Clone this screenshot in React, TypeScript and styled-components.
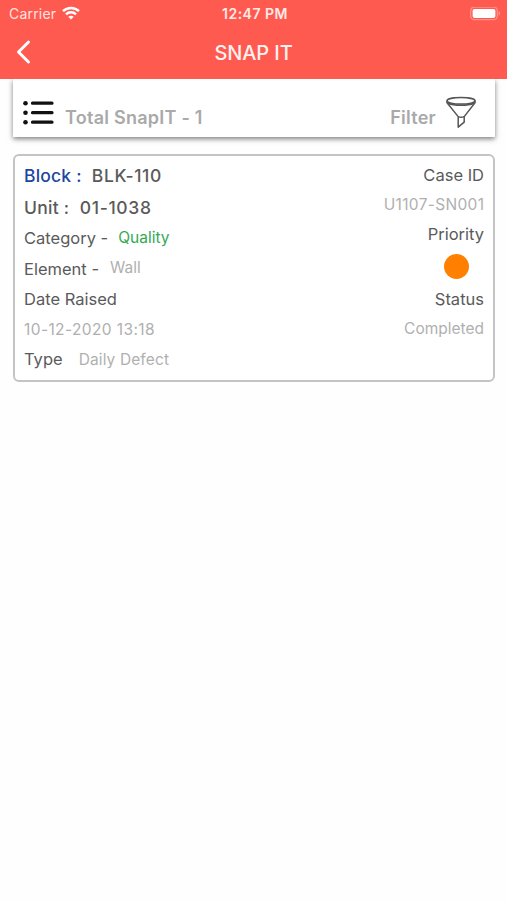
import React from "react";
import styled, { createGlobalStyle } from "styled-components";

const GlobalStyle = createGlobalStyle`
  * { box-sizing: border-box; }
  body {
    margin: 0;
    background: #fefefe;
    font-family: Inter, "Liberation Sans", sans-serif;
  }
`;

const Screen = styled.div`
  width: 100%;
  min-height: 900px;
  background: #fefefe;
`;

const Header = styled.header`
  position: relative;
  z-index: 1;
  height: 79px;
  background: #ff5a50;
  color: #fff;
`;

const StatusBar = styled.div`
  display: grid;
  grid-template-columns: 1fr auto 1fr;
  align-items: center;
  height: 28px;
  padding: 0 6px 0 9px;
`;

const Carrier = styled.div`
  display: flex;
  align-items: center;
  gap: 6px;
  font-size: 14px;
  line-height: 28px;
  letter-spacing: 0.2px;
  color: #ffe3e0;
`;

const WifiIcon = styled.svg`
  margin-bottom: 2px;
`;

const Clock = styled.div`
  padding-bottom: 2px;
  font-size: 14px;
  font-weight: 600;
  letter-spacing: 0.5px;
  color: #ffe9e7;
`;

const Battery = styled.svg`
  justify-self: end;
`;

const NavBar = styled.div`
  display: grid;
  grid-template-columns: 48px 1fr 48px;
  align-items: center;
  height: 49px;
`;

const BackButton = styled.button`
  display: flex;
  width: 48px;
  padding: 0 0 1px 15px;
  border: 0;
  background: none;
  color: #fff;
`;

const Title = styled.h1`
  margin: 0;
  text-align: center;
  font-size: 20px;
  font-weight: 550;
  line-height: 24px;
  letter-spacing: -0.1px;
  color: #fff1ef;
`;

const Toolbar = styled.div`
  display: flex;
  align-items: flex-start;
  height: 58px;
  margin: 0 12px 0 13px;
  padding: 16px 17px 0 9px;
  background: #fff;
  box-shadow: 0 2px 5px rgba(0, 0, 0, 0.5);
`;

const ToolbarLabel = styled.span<{ $end?: boolean }>`
  margin: 11px 0 0 ${(p) => (p.$end ? "auto" : "11px")};
  font-size: 18px;
  font-weight: 600;
  line-height: 24px;
  letter-spacing: 0.25px;
  white-space: nowrap;
  color: #a9a9a9;
`;

const FunnelIcon = styled.svg`
  margin-left: 8px;
`;

const Card = styled.article`
  display: flex;
  justify-content: space-between;
  height: 228px;
  margin: 17px 12px 0 13px;
  padding: 3px 9px;
  border: 2px solid #c4c4c4;
  border-radius: 6px;
  background: #fff;
`;

const Column = styled.div<{ $end?: boolean }>`
  display: flex;
  flex-direction: column;
  align-items: ${(p) => (p.$end ? "flex-end" : "flex-start")};
`;

const Row = styled.div<{ $height: number }>`
  display: flex;
  align-items: center;
  height: ${(p) => p.$height}px;
  white-space: nowrap;
`;

const Label = styled.span`
  font-size: 16.5px;
  color: #5a5a5a;
`;

const Strong = styled.span<{ $accent?: boolean; $gap?: number; $tracking?: number }>`
  margin-left: ${(p) => p.$gap ?? 0}px;
  font-size: 17.5px;
  font-weight: 550;
  letter-spacing: ${(p) => p.$tracking ?? 0}px;
  color: ${(p) => (p.$accent ? "#1d469f" : "#5a5a5a")};
`;

const Value = styled.span<{ $good?: boolean; $gap?: number; $raise?: number; $tracking?: number }>`
  margin-left: ${(p) => p.$gap ?? 0}px;
  margin-right: ${(p) => -(p.$tracking ?? 0)}px;
  padding-bottom: ${(p) => p.$raise ?? 0}px;
  font-size: 15.5px;
  letter-spacing: ${(p) => p.$tracking ?? 0}px;
  color: ${(p) => (p.$good ? "#35a853" : "#b0b0b0")};
`;

const PriorityDot = styled.i`
  width: 25px;
  height: 25px;
  margin-right: 15px;
  border-radius: 50%;
  background: #ff8000;
`;

export default function App() {
  return (
    <Screen>
      <GlobalStyle />
      <Header>
        <StatusBar>
          <Carrier>
            Carrier
            <WifiIcon width="18" height="14" viewBox="0 0 18 14" fill="none" stroke="#fff" strokeWidth="2.5">
              <path d="M1 5.1C5.5.8 12.5.8 17 5.1" />
              <path d="M4 8.3C6.8 5.7 11.2 5.7 14 8.3" />
              <path d="M9 13.5 6.3 10.8C7.8 9.4 10.2 9.4 11.7 10.8Z" fill="#fff" stroke="none" />
            </WifiIcon>
          </Carrier>
          <Clock>12:47 PM</Clock>
          <Battery width="31" height="14" viewBox="0 0 31 14">
            <rect x="0.7" y="0.2" width="26.6" height="12.4" rx="3.5" fill="none" stroke="#ff9189" strokeWidth="1.3" />
            <rect x="2.6" y="1.9" width="22.8" height="9" rx="1.8" fill="#fff" />
            <path d="M28.6 4.1C30.8 4.9 30.8 7.9 28.6 8.7Z" fill="#ff9189" />
          </Battery>
        </StatusBar>
        <NavBar>
          <BackButton aria-label="Back">
            <svg width="18" height="26" viewBox="0 0 18 26" fill="none" stroke="currentColor" strokeWidth="3" strokeLinecap="round" strokeLinejoin="round">
              <path d="M13.5 3 3.5 13 13.5 23" />
            </svg>
          </BackButton>
          <Title>SNAP IT</Title>
        </NavBar>
      </Header>
      <Toolbar>
        <svg width="32" height="34" viewBox="0 0 32 34" stroke="#111" strokeLinecap="round" fill="#111">
          <path d="M10.5 8.2H30M10.5 17.7H30M10.5 27.2H30" strokeWidth="3.2" />
          <g stroke="none">
            <circle cx="3.5" cy="8.2" r="2.3" />
            <circle cx="3.5" cy="17.7" r="2.3" />
            <circle cx="3.5" cy="27.2" r="2.3" />
          </g>
        </svg>
        <ToolbarLabel>Total SnapIT - 1</ToolbarLabel>
        <ToolbarLabel $end>Filter</ToolbarLabel>
        <FunnelIcon width="34" height="34" viewBox="0 0 34 34" fill="none" stroke="#555" strokeWidth="1.5" strokeLinejoin="round">
          <ellipse cx="17" cy="5.8" rx="14" ry="3.3" />
          <path d="M3 5.8V7.8L14.2 21.6V32.2L20.2 27.2V21.6L31 7.8V5.8" />
          <path d="M4 8.3C10 11 24 11 30 8.3M14.2 21.6C16 22.4 18.4 22.4 20.2 21.6" />
        </FunnelIcon>
      </Toolbar>
      <Card>
        <Column>
          <Row $height={32}>
            <Strong $accent $tracking={0.2}>Block :</Strong>
            <Strong $gap={10} $tracking={0.65}>BLK-110</Strong>
          </Row>
          <Row $height={32}>
            <Strong $tracking={0.25}>Unit :</Strong>
            <Strong $gap={10.5} $tracking={0.65}>01-1038</Strong>
          </Row>
          <Row $height={30.5}>
            <Label>Category -</Label>
            <Value $good $gap={10} $raise={2}>Quality</Value>
          </Row>
          <Row $height={30.5}>
            <Label>Element -</Label>
            <Value $gap={11} $raise={3}>Wall</Value>
          </Row>
          <Row $height={30}>
            <Label>Date Raised</Label>
          </Row>
          <Row $height={30}>
            <Value $tracking={0.4}>10-12-2020 13:18</Value>
          </Row>
          <Row $height={30}>
            <Label>Type</Label>
            <Value $gap={16} $tracking={0.12}>Daily Defect</Value>
          </Row>
        </Column>
        <Column $end>
          <Row $height={31}>
            <Label>Case ID</Label>
          </Row>
          <Row $height={29}>
            <Value $tracking={0.33}>U1107-SN001</Value>
          </Row>
          <Row $height={30}>
            <Label>Priority</Label>
          </Row>
          <Row $height={35}>
            <PriorityDot />
          </Row>
          <Row $height={29}>
            <Label>Status</Label>
          </Row>
          <Row $height={30}>
            <Value>Completed</Value>
          </Row>
        </Column>
      </Card>
    </Screen>
  );
}
